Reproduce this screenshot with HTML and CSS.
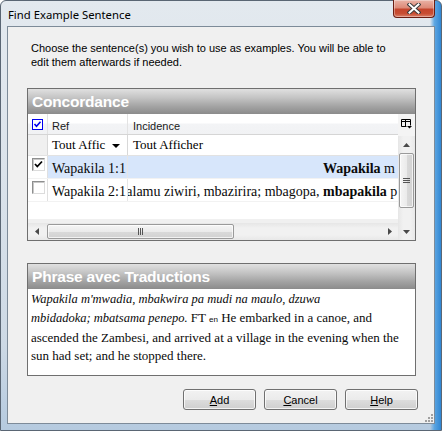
FILE: index.html
```html
<!DOCTYPE html>
<html>
<head>
<meta charset="utf-8">
<title>Find Example Sentence</title>
<link rel="stylesheet" href="styles.css">
</head>
<body>
<div class="window">
  <div class="titlebar">
    <span class="title">Find Example Sentence</span>
    <div class="close">
      <svg width="14" height="11" viewBox="0 0 14 11">
        <path d="M2.5 1.5 L11.5 9.5 M11.5 1.5 L2.5 9.5" stroke="#3b3b3b" stroke-width="4" stroke-linecap="square"/>
        <path d="M2.5 1.5 L11.5 9.5 M11.5 1.5 L2.5 9.5" stroke="#ffffff" stroke-width="2" stroke-linecap="square"/>
      </svg>
    </div>
  </div>
  <div class="client">
    <p class="intro">Choose the sentence(s) you wish to use as examples. You will be able to<br>edit them afterwards if needed.</p>

    <section class="panel conc">
      <div class="panel-head">Concordance</div>
      <div class="grid">
        <div class="grid-main">
          <div class="row hdr">
            <div class="c0">
              <span class="cb-blue">
                <svg width="9" height="9" viewBox="0 0 9 9"><path d="M1.5 4 L3.5 6.2 L7.5 1.8" fill="none" stroke="#0000ee" stroke-width="1.6"/></svg>
              </span>
            </div>
            <div class="c1">Ref</div>
            <div class="c2">Incidence</div>
          </div>
          <div class="row filter">
            <div class="c0"></div>
            <div class="c1"><span class="ft">Tout Affic</span><span class="dd"></span></div>
            <div class="c2"><span class="ft">Tout Afficher</span></div>
          </div>
          <div class="row data sel">
            <div class="c0">
              <span class="cb">
                <svg width="11" height="11" viewBox="0 0 11 11"><path d="M2 5 L4.3 7.5 L9 2.5" fill="none" stroke="#000" stroke-width="1.8"/></svg>
              </span>
            </div>
            <div class="c1">Wapakila 1:1</div>
            <div class="c2">
              <div class="ctx-l"><span></span></div>
              <div class="ctx-r"><b>Wapakila</b> m</div>
            </div>
          </div>
          <div class="row data">
            <div class="c0"><span class="cb"></span></div>
            <div class="c1">Wapakila 2:1</div>
            <div class="c2">
              <div class="ctx-l"><span>alamu ziwiri, mbazirira; mbagopa,&nbsp;</span></div>
              <div class="ctx-r"><b>mbapakila</b> p</div>
            </div>
          </div>
          <div class="empty"></div>
          <div class="strip"></div>
          <div class="hscroll">
            <div class="sb-btn">
              <svg width="4" height="7" viewBox="0 0 4 7"><path d="M4 0 L0 3.5 L4 7 Z" fill="#4a4a4a"/></svg>
            </div>
            <div class="htrack">
              <div class="hthumb">
                <svg width="6" height="7" viewBox="0 0 6 7"><path d="M0.5 0 V7 M2.5 0 V7 M4.5 0 V7" stroke="#555" stroke-width="1"/></svg>
              </div>
            </div>
            <div class="sb-btn">
              <svg width="4" height="7" viewBox="0 0 4 7"><path d="M0 0 L4 3.5 L0 7 Z" fill="#4a4a4a"/></svg>
            </div>
          </div>
        </div>
        <div class="vside">
          <div class="colchooser">
            <svg width="11" height="10" viewBox="0 0 11 10">
              <path d="M0.5 0.5 H9.5 V6.5 M0.5 0.5 V7.5 H5.5 M0.5 2.5 H9.5 M4.5 0.5 V7.5" fill="none" stroke="#000" stroke-width="1"/>
              <path d="M6 7 H11 L8.5 9.5 Z" fill="#000"/>
            </svg>
          </div>
          <div class="vscroll">
            <div class="sb-btn v">
              <svg width="7" height="4" viewBox="0 0 7 4"><path d="M0 4 L3.5 0 L7 4 Z" fill="#4a4a4a"/></svg>
            </div>
            <div class="vtrack">
              <div class="vthumb">
                <svg width="7" height="6" viewBox="0 0 7 6"><path d="M0 0.5 H7 M0 2.5 H7 M0 4.5 H7" stroke="#555" stroke-width="1"/></svg>
              </div>
            </div>
            <div class="sb-btn v">
              <svg width="7" height="4" viewBox="0 0 7 4"><path d="M0 0 L7 0 L3.5 4 Z" fill="#4a4a4a"/></svg>
            </div>
          </div>
        </div>
      </div>
    </section>

    <section class="panel phrase">
      <div class="panel-head">Phrase avec Traductions</div>
      <div class="phrase-body">
        <div class="ln l1"><i>Wapakila m'mwadia, mbakwira pa mudi na maulo, dzuwa</i></div>
        <div class="ln l2"><i>mbidadoka; mbatsama penepo.</i> FT <span class="ws">en</span> He embarked in a canoe, and</div>
        <div class="ln l3">ascended the Zambesi, and arrived at a village in the evening when the</div>
        <div class="ln l4">sun had set; and he stopped there.</div>
      </div>
    </section>

    <div class="buttons">
      <button class="btn"><u>A</u>dd</button>
      <button class="btn"><u>C</u>ancel</button>
      <button class="btn"><u>H</u>elp</button>
    </div>

    <div class="grip">
      <svg width="10" height="10" viewBox="0 0 10 10">
        <g fill="#a0a0a0">
          <rect x="8" y="2" width="2" height="2"/>
          <rect x="5" y="5" width="2" height="2"/><rect x="8" y="5" width="2" height="2"/>
          <rect x="2" y="8" width="2" height="2"/><rect x="5" y="8" width="2" height="2"/><rect x="8" y="8" width="2" height="2"/>
        </g>
      </svg>
    </div>
  </div>
</div>
</body>
</html>
```

FILE: styles.css
```css
* { box-sizing: border-box; }
html, body { margin: 0; padding: 0; }
body {
  width: 442px;
  height: 431px;
  overflow: hidden;
  background: #ffffff;
  font-family: "Liberation Sans", Arial, sans-serif;
  font-size: 11px;
  color: #000;
}

.window {
  width: 442px;
  height: 431px;
  display: flex;
  flex-direction: column;
  border: 1px solid #5a6674;
  border-radius: 6px 6px 0 0;
  padding: 0 6px 6px 6px;
  background:
    linear-gradient(90deg, rgba(255,255,255,0) 0%, rgba(255,255,255,0) 97.5%, rgba(80,160,225,0.9) 98.5%, rgba(40,130,210,0.95) 100%),
    linear-gradient(180deg, #e3e9ef 0%, #dbe3eb 40%, #cdd9e5 80%, #b5cadf 100%);
}

/* title bar */
.titlebar {
  height: 25px;
  flex: none;
  display: flex;
  justify-content: space-between;
  align-items: flex-start;
}
.title {
  font-family: "Noto Sans", "Open Sans", sans-serif;
  font-size: 11.3px;
  line-height: 16px;
  padding: 6px 0 0 1px;
  color: #000;
}
.close {
  width: 42px;
  height: 18px;
  margin-top: -1px;
  border: 1px solid #6b1d12;
  border-top: none;
  border-radius: 0 0 4px 4px;
  background: linear-gradient(180deg, #eab3a6 0%, #dd8a78 45%, #c4452d 55%, #c84e33 80%, #d9806a 100%);
  box-shadow: inset 0 0 0 1px rgba(255,255,255,0.35);
  display: flex;
  align-items: center;
  justify-content: center;
}
.close svg { display: block; }

/* client area */
.client {
  flex: 1;
  position: relative;
  background: #f0f0f0;
  border: 1px solid #7d8b99;
  display: flex;
  flex-direction: column;
}
.intro {
  margin: 14px 0 0 23px;
  line-height: 14px;
  font-size: 11px;
}

/* panels */
.panel {
  margin-left: 19px;
  width: 389px;
  border: 1px solid #6f6f6f;
  background: #fff;
  display: flex;
  flex-direction: column;
  flex: none;
}
.conc { margin-top: 19px; height: 153px; }
.phrase { margin-top: 22px; height: 113px; }

.panel-head {
  height: 25px;
  flex: none;
  background: linear-gradient(180deg, #e0e0e0 0%, #c4c4c4 35%, #a3a3a3 70%, #8b8b8b 100%);
  color: #fff;
  font-weight: bold;
  font-size: 15.5px;
  line-height: 25px;
  padding-left: 4px;
  letter-spacing: -0.2px;
}

/* grid */
.grid {
  flex: 1;
  display: flex;
  min-height: 0;
}
.grid-main {
  width: 370px;
  display: flex;
  flex-direction: column;
  background: #fff;
}
.row {
  display: flex;
  flex: none;
}
.c0 {
  width: 20px;
  border-right: 1px solid #d8d8d8;
  flex: none;
}
.c1 {
  width: 80px;
  border-right: 1px solid #d8d8d8;
  padding-left: 4px;
  flex: none;
  white-space: nowrap;
  overflow: hidden;
}
.c2 {
  flex: 1;
  padding-left: 5px;
  white-space: nowrap;
  overflow: hidden;
}

.hdr {
  height: 21px;
  background: linear-gradient(180deg, #ffffff 0%, #ffffff 45%, #f3f4f6 50%, #f1f2f4 100%);
  border-bottom: 1px solid #d5d5d5;
  line-height: 20px;
  color: #1a1a1a;
}
.hdr .c0 {
  display: flex;
  align-items: flex-start;
  padding: 5px 0 0 4px;
  border-right-color: #e3e3e3;
}
.hdr .c1, .hdr .c2 { padding-top: 2px; border-right-color: #e3e3e3; }
.cb-blue {
  width: 11px;
  height: 11px;
  border: 1px solid #0000ee;
  background: #fff;
  display: flex;
  align-items: center;
  justify-content: center;
}
.cb-blue svg { display: block; }

.filter {
  height: 21px;
  border-bottom: 1px solid #e2e2e2;
  font-family: "Liberation Serif", "Times New Roman", serif;
  font-size: 13px;
  line-height: 20px;
}
.filter .c0 { background: #f0f0f0; }
.filter .c1 {
  display: flex;
  align-items: center;
  padding-left: 4px;
}
.filter .c2 { padding-left: 5px; }
.dd {
  width: 0;
  height: 0;
  margin-left: 7px;
  margin-top: 1px;
  border-left: 4px solid transparent;
  border-right: 4px solid transparent;
  border-top: 4px solid #000;
}

.data {
  height: 23px;
  border-bottom: 1px solid #f2f2f2;
  font-family: "Liberation Serif", "Times New Roman", serif;
  font-size: 14px;
  line-height: 22px;
  color: #0a0a0a;
}
.data .c0 {
  background: #fff;
  padding: 2px 0 0 4px;
  border-right-color: #e0e0e0;
}
.data .c1 { padding-top: 2px; border-right-color: #e6e6e6; }
.data .c2 {
  padding-left: 0;
  padding-top: 2px;
  display: flex;
}
.sel .c1, .sel .c2 { background: #d7e6fb; }
.ctx-l {
  width: 195px;
  flex: none;
  overflow: hidden;
  display: flex;
  justify-content: flex-end;
}
.ctx-l span { flex: none; white-space: pre; }
.ctx-r { flex: none; white-space: nowrap; }

.cb {
  width: 13px;
  height: 13px;
  display: flex;
  align-items: center;
  justify-content: center;
  background: #fff;
  border: 1px solid;
  border-color: #8e8f8f #dcdcdc #dcdcdc #8e8f8f;
  box-shadow: inset 1px 1px 0 #c8c8c8;
}
.cb svg { display: block; }

.empty { flex: 1; background: #fff; }
.strip { height: 4px; flex: none; background: #f0f0f0; }

/* scrollbars */
.hscroll {
  height: 17px;
  flex: none;
  display: flex;
  background: linear-gradient(180deg, #e6e6e6 0%, #f1f1f1 30%, #f1f1f1 70%, #e8e8e8 100%);
}
.sb-btn {
  width: 17px;
  height: 17px;
  flex: none;
  display: flex;
  align-items: center;
  justify-content: center;
}
.sb-btn svg { display: block; }
.htrack {
  flex: 1;
  padding: 1px 0 1px 2px;
  display: flex;
}
.hthumb {
  width: 187px;
  height: 15px;
  border: 1px solid #9a9a9a;
  border-radius: 2px;
  background: linear-gradient(180deg, #f5f5f5 0%, #ebebeb 50%, #dadada 51%, #d2d2d2 100%);
  box-shadow: inset 0 0 0 1px rgba(255,255,255,0.7);
  display: flex;
  align-items: center;
  justify-content: center;
}
.hthumb svg { display: block; }

.vside {
  width: 17px;
  flex: none;
  display: flex;
  flex-direction: column;
  background: #f0f0f0;
}
.colchooser {
  height: 22px;
  flex: none;
  display: flex;
  justify-content: center;
  padding-top: 5px;
  background: #f4f4f4;
}
.colchooser svg { display: block; }
.vscroll {
  flex: 1;
  display: flex;
  flex-direction: column;
  background: linear-gradient(90deg, #e6e6e6 0%, #f1f1f1 30%, #f1f1f1 70%, #e8e8e8 100%);
}
.vtrack {
  flex: 1;
  padding: 0 1px;
}
.vthumb {
  width: 15px;
  height: 55px;
  border: 1px solid #9a9a9a;
  border-radius: 2px;
  background: linear-gradient(90deg, #f5f5f5 0%, #ebebeb 50%, #dadada 51%, #d2d2d2 100%);
  box-shadow: inset 0 0 0 1px rgba(255,255,255,0.7);
  display: flex;
  align-items: center;
  justify-content: center;
}
.vthumb svg { display: block; }

/* phrase */
.phrase-body {
  flex: 1;
  background: #fff;
  padding-left: 3px;
  font-family: "Liberation Serif", "Times New Roman", serif;
  font-size: 13px;
  white-space: nowrap;
  color: #0a0a0a;
}
.phrase-body i { font-size: 12.5px; }
.ln { line-height: 18px; }
.l1 { line-height: 19px; }
.l4 { line-height: 17px; }
.ws {
  font-family: "Liberation Sans", Arial, sans-serif;
  font-size: 8px;
}

/* buttons */
.buttons {
  display: flex;
  justify-content: flex-end;
  gap: 8px;
  margin: 13px 16px 0 0;
}
.btn {
  width: 73px;
  height: 21px;
  padding: 0;
  font-family: "Liberation Sans", Arial, sans-serif;
  font-size: 11px;
  color: #000;
  border: 1px solid #707070;
  border-radius: 3px;
  background: linear-gradient(180deg, #f2f2f2 0%, #ebebeb 50%, #dddddd 51%, #cfcfcf 100%);
  box-shadow: inset 0 0 0 1px rgba(255,255,255,0.75);
}

.grip {
  position: absolute;
  right: 1px;
  bottom: 1px;
  line-height: 0;
}
```
